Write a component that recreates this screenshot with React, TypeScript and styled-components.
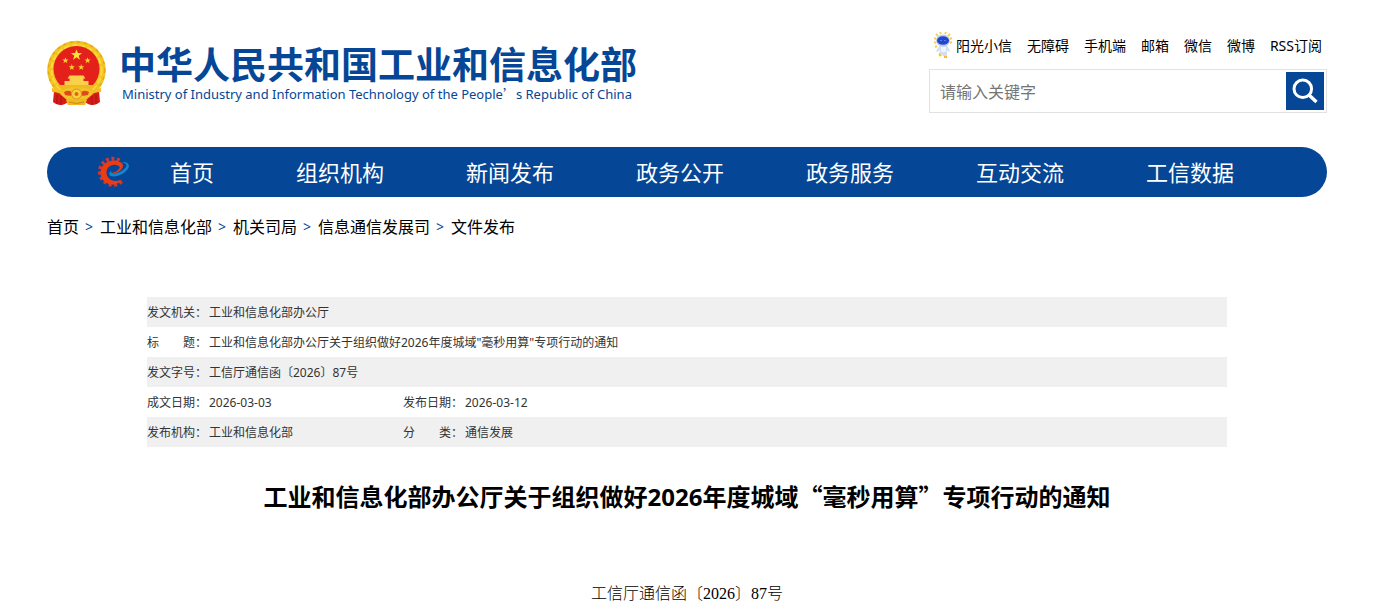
import React from "react";
import styled, { createGlobalStyle } from "styled-components";

const BLUE = "#054696";

const GlobalStyle = createGlobalStyle`
  *, *::before, *::after { box-sizing: border-box; }
  body {
    margin: 0;
    background: #fff;
    color: #000;
    font-family: "Noto Sans", "Noto Sans CJK SC", sans-serif;
    font-size: 16px;
  }
  a { color: inherit; text-decoration: none; }
`;

const Page = styled.div`
  padding: 0 4px 0 0;
`;

const Container = styled.div`
  width: 100%;
  max-width: 1280px;
  margin: 0 auto;
`;

const Header = styled.header`
  display: flex;
  justify-content: space-between;
  align-items: flex-start;
  padding: 31px 0 34px;
`;

const Brand = styled.a`
  display: flex;
  align-items: flex-start;
  gap: 12px;
  padding-top: 9px;
  color: ${BLUE};
`;

const BrandText = styled.span`
  display: flex;
  flex-direction: column;
  padding-top: 2px;
  white-space: nowrap;
`;

const BrandName = styled.span`
  font-size: 37px;
  font-weight: 700;
  line-height: 46px;
`;

const BrandEnglish = styled.span`
  padding-left: 3px;
  font-size: 13px;
  line-height: 12px;
`;

const Tools = styled.div`
  width: 398px;
`;

const TopLinks = styled.nav`
  display: flex;
  justify-content: flex-end;
  align-items: center;
  gap: 15px;
  height: 28px;
  padding-right: 5px;
  font-size: 14px;
  white-space: nowrap;
`;

const TopLink = styled.a`
  display: flex;
  align-items: center;
  gap: 4px;
`;

const SearchForm = styled.form`
  display: flex;
  align-items: center;
  height: 44px;
  margin-top: 10px;
  padding: 0 2px 0 10px;
  border: 1px solid #e2e2e2;
`;

const SearchInput = styled.input`
  flex: 1;
  min-width: 0;
  height: 40px;
  padding: 2px 0 0;
  border: 0;
  outline: 0;
  background: transparent;
  font: inherit;
  &::placeholder { color: #757575; }
`;

const SearchButton = styled.button`
  display: flex;
  align-items: center;
  justify-content: center;
  width: 38px;
  height: 38px;
  padding: 0;
  border: 0;
  background: ${BLUE};
  cursor: pointer;
`;

const MainNav = styled.nav`
  display: flex;
  align-items: center;
  height: 50px;
  padding: 0 52px 0 50px;
  border-radius: 25px;
  background: ${BLUE};
  color: #fff;
  font-size: 22px;
`;

const NavLink = styled.a<{ $share: number }>`
  flex: ${(p) => p.$share} 1 0;
  line-height: 50px;
  text-align: center;
  white-space: nowrap;
`;

const Breadcrumb = styled.nav`
  display: flex;
  align-items: center;
  gap: 6px;
  padding: 18px 0 0;
  line-height: 24px;
`;

const Separator = styled.span`
  width: 9px;
  color: ${BLUE};
  font-size: 14px;
`;

const Article = styled.main`
  max-width: 1080px;
  margin: 58px auto 0;
`;

const InfoTable = styled.table`
  width: 100%;
  border-collapse: collapse;
  table-layout: fixed;
  color: #333;
  font-size: 12px;
  line-height: 18px;
`;

const InfoRow = styled.tr`
  height: 30px;
  &:nth-child(odd) { background: #f0f0f0; }
`;

const Label = styled.th`
  padding: 2px 0 0;
  font-weight: 400;
  text-align: left;
  white-space: pre;
`;

const Value = styled.td`
  padding: 2px 0 0;
`;

const Title = styled.h1`
  margin: 31px 0 0;
  font-size: 24px;
  font-weight: 700;
  line-height: 36px;
  text-align: center;
`;

const Quote = styled.span`
  font-family: "Noto Sans CJK SC", sans-serif;
`;

const DocNumber = styled.p`
  margin: 67px 0 0;
  font-family: "Liberation Serif", "Noto Sans CJK SC", serif;
  font-weight: 300;
  line-height: 24px;
  text-align: center;
`;

const star = (cx: number, cy: number, r: number) =>
  Array.from({ length: 10 }, (_, i) => {
    const d = i % 2 ? r * 0.4 : r;
    const a = (Math.PI / 5) * i - Math.PI / 2;
    return `${(cx + d * Math.cos(a)).toFixed(2)},${(cy + d * Math.sin(a)).toFixed(2)}`;
  }).join(" ");

const Emblem = () => (
  <svg width="60" height="66" viewBox="0 0 60 66" aria-hidden="true">
    <circle cx="29.5" cy="30" r="29.3" fill="#f3c31f" />
    <circle cx="29.5" cy="30" r="28.2" fill="none" stroke="#e3a817" strokeWidth="1.4" strokeDasharray="3 4" />
    <circle cx="29.5" cy="30" r="25" fill="none" stroke="#f9d840" strokeWidth="2" strokeDasharray="6 2" />
    <circle cx="29.5" cy="29" r="23" fill="#e4201a" />
    <polygon points={star(29.5, 15, 5.8)} fill="#fde23a" />
    <polygon points={star(18.4, 20.5, 3.3)} fill="#fbd12c" />
    <polygon points={star(24.8, 27.3, 3.3)} fill="#fbd12c" />
    <polygon points={star(34.2, 27.3, 3.3)} fill="#fbd12c" />
    <polygon points={star(40.6, 20.5, 3.3)} fill="#fbd12c" />
    <path d="M22.500 35.500h14l2 3h-2v2.500h5v4H17.500v-4h5v-2.500h-2z" fill="#f8d04a" />
    <path d="M10 45h39l-5 5H15z" fill="#f0b91e" />
    <path d="M7 51q6-1 11 3h23q5-4 11-3l1 11-3 2q-5 2-9 0l-3-2H21l-3 2q-4 2-9 0l-3-2z" fill="#d51c18" />
    <path d="M5 48q9 1 14 6l-2 2q-5-4-12-4zM54 48q-9 1-14 6l2 2q5-4 12-4z" fill="#f3c126" />
    <path d="M10 55v9M14 56v9M45 56v9M49 55v9" stroke="#ac1316" strokeWidth="1" />
    <path d="M15 50q14-6 29 0l2 4-7 6H20l-7-6z" fill="#f2c32b" />
    <path d="M17 52q6-3 8 1t-7 2zM42 52q-6-3-8 1t7 2z" fill="#df4a1b" />
    <circle cx="29.500" cy="54" r="5" fill="#f8d23c" stroke="#d99218" />
    <circle cx="29.500" cy="54" r="2" fill="#e2631c" />
    <path d="M19 60q5-2 10.500 0q5.500-2 10.500 0l-2 5H21z" fill="#f0b923" />
    <path d="M22 62q7 3 15 0" fill="none" stroke="#d1851a" strokeWidth="1" />
  </svg>
);

const GearLogo = () => (
  <svg width="32" height="32" viewBox="0 0 32 32" aria-hidden="true">
    <path
      d="M22.500 4.500A13 13 0 1 0 25 25"
      fill="none"
      stroke="#c93a38"
      strokeWidth="4"
      strokeDasharray="3 2.400"
    />
    <path
      d="M24 6.500C15 1 3.500 7 3.500 16.500C3.500 25 11 29.500 17 28.500C20.500 28 23.500 26 25 23.500C18 27 9.500 24 9.500 16.500C9.500 10 17 6.500 22.500 10.500C23.500 13 19 16.500 13.500 17C12.500 17 12 17.500 12.500 18C19 18.500 26 14 26 10C26 8.500 25.500 7.500 24 6.500z"
      fill="#ee3b12"
    />
    <path
      d="M24 6C30 5.500 33 8 31.500 11.500C29.500 17 19 22 14 20C11.500 19 12 16.500 14.500 14.500C13.500 17 15 18 18 17.500C24 16.500 29.500 12 29.500 9.500C29.500 7.500 27 6.500 24 6z"
      fill="#1685cf"
    />
  </svg>
);

const Mascot = () => (
  <svg width="18" height="26" viewBox="0 0 18 26" aria-hidden="true">
    <path
      d="M2 11l-2-1M2 7L0 6M4 4L2 2M7 2L6 0M11 2l1-2M14 4l2-2M16 7l2-1M16 11l2-1M3 14l-2 1"
      stroke="#f7cf4c"
      strokeWidth="2"
    />
    <path d="M6 13h7l3 6-1 1-2-2v6H9l-1-1-3-1 1-4-3 2-1-1z" fill="#d3dff0" />
    <path d="M7 15h5v5H7z" fill="#f0f5fc" />
    <ellipse cx="9" cy="8.500" rx="7" ry="6" fill="#b9c9f2" />
    <ellipse cx="9" cy="8.500" rx="6" ry="4.300" fill="#2446c8" />
    <path d="M6 8.500h2M10 8.500h2" stroke="#4d7ff0" strokeWidth="1" />
    <path d="M5 22l2 2M10 25h3" stroke="#f3bd35" strokeWidth="2" />
  </svg>
);

const SearchIcon = () => (
  <svg width="26" height="26" viewBox="0 0 26 26" fill="none" stroke="#fff" aria-hidden="true">
    <circle cx="10.800" cy="10.800" r="8.800" strokeWidth="3" />
    <path d="M17 17l7.500 7" strokeWidth="3.500" />
  </svg>
);

const topLinks = ["无障碍", "手机端", "邮箱", "微信", "微博", "RSS订阅"];
const sections = ["组织机构", "新闻发布", "政务公开", "政务服务", "互动交流", "工信数据"];
const trail = ["首页", "工业和信息化部", "机关司局", "信息通信发展司", "文件发布"];
const info: string[][] = [
  ["发文机关：", "工业和信息化部办公厅"],
  ["标\u3000\u3000题：", "工业和信息化部办公厅关于组织做好2026年度城域\"毫秒用算\"专项行动的通知"],
  ["发文字号：", "工信厅通信函〔2026〕87号"],
  ["成文日期：", "2026-03-03", "发布日期：", "2026-03-12"],
  ["发布机构：", "工业和信息化部", "分\u3000\u3000类：", "通信发展"],
];

export default function App() {
  return (
    <Page lang="zh-CN">
      <GlobalStyle />
      <Container>
        <Header>
          <Brand href="#">
            <Emblem />
            <BrandText>
              <BrandName>中华人民共和国工业和信息化部</BrandName>
              <BrandEnglish>
                Ministry of Industry and Information Technology of the People<Quote>’</Quote>s Republic of China
              </BrandEnglish>
            </BrandText>
          </Brand>
          <Tools>
            <TopLinks aria-label="快捷入口">
              <TopLink href="#">
                <Mascot />
                阳光小信
              </TopLink>
              {topLinks.map((t) => (
                <TopLink href="#" key={t}>{t}</TopLink>
              ))}
            </TopLinks>
            <SearchForm role="search" onSubmit={(e) => e.preventDefault()}>
              <SearchInput type="text" placeholder="请输入关键字" aria-label="请输入关键字" />
              <SearchButton type="submit" aria-label="搜索">
                <SearchIcon />
              </SearchButton>
            </SearchForm>
          </Tools>
        </Header>
        <MainNav aria-label="主导航">
          <GearLogo />
          <NavLink href="#" $share={126}>首页</NavLink>
          {sections.map((s) => (
            <NavLink href="#" key={s} $share={170}>{s}</NavLink>
          ))}
        </MainNav>
        <Breadcrumb aria-label="当前位置">
          {trail.map((t, i) => (
            <React.Fragment key={t}>
              {i > 0 && <Separator>&gt;</Separator>}
              <a href="#">{t}</a>
            </React.Fragment>
          ))}
        </Breadcrumb>
        <Article>
          <InfoTable>
            <colgroup>
              <col width="62" />
              <col width="194" />
              <col width="62" />
              <col />
            </colgroup>
            <tbody>
              {info.map(([label, value, label2, value2]) => (
                <InfoRow key={label}>
                  <Label scope="row">{label}</Label>
                  <Value colSpan={label2 ? 1 : 3}>{value}</Value>
                  {label2 && <Label scope="row">{label2}</Label>}
                  {label2 && <Value>{value2}</Value>}
                </InfoRow>
              ))}
            </tbody>
          </InfoTable>
          <Title>
            工业和信息化部办公厅关于组织做好2026年度城域<Quote>“</Quote>毫秒用算<Quote>”</Quote>专项行动的通知
          </Title>
          <DocNumber>工信厅通信函〔2026〕87号</DocNumber>
        </Article>
      </Container>
    </Page>
  );
}
